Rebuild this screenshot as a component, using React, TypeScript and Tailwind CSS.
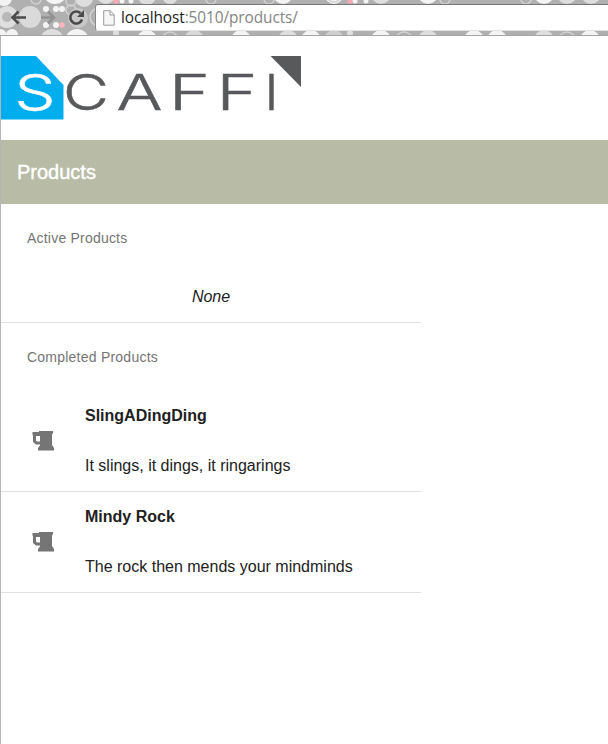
import React from "react";

type Dot = [number, number, number, string];

const dots: Dot[] = [
  [4, -2, 8, "#f2f2f2"], [7, 17, 11, "#dedede"], [7, 17, 5, "#b8b8b8"], [30, 17, 11, "#dadada"],
  [55, -8, 12, "#f4f4f4"], [78, 18, 10, "#c8c8c8"], [0, 36, 7, "#f4f4f4"], [12, 35, 6, "#f4f4f4"],
  [52, 41, 12, "#dedede"], [77, 41, 12, "#f4f4f4"], [46, 9, 3, "#f4f4f4"], [56, 9, 3, "#f4f4f4"],
  [62, 9, 3, "#f4f4f4"], [46, 25, 3, "#f4f4f4"], [56, 25, 3, "#f4f4f4"], [62, 25, 2.7, "#ffb3bd"],
  [84, -2, 9, "#dedede"], [106, -5, 9, "#e0e0e0"], [116, 1, 2.7, "#ffa8b4"], [122, 1, 2.5, "#f4f4f4"],
  [131, 1, 2.5, "#f4f4f4"], [147, -4, 9, "#dedede"], [170, -4, 8, "#dedede"],
  [283, -6, 10, "#f4f4f4"], [334, -5, 9, "#f4f4f4"], [350, 1, 2.7, "#ffa8b4"], [355, 1, 2.5, "#f4f4f4"],
  [366, 1, 2.5, "#f4f4f4"], [381, -6, 10, "#dedede"], [428, -6, 10, "#f4f4f4"],
  [544, -6, 10, "#f4f4f4"], [567, -6, 10, "#dedede"], [591, -6, 10, "#dedede"],
  [116, 33, 3, "#dedede"], [147, 40, 10, "#f4f4f4"], [194, 40, 10, "#d8d8d8"],
  [241, 40, 10, "#f4f4f4"], [288, 40, 10, "#dedede"],
  [311, 40, 10, "#f4f4f4"], [334, 40, 10, "#d0d0d0"], [350, 33, 3, "#dedede"],
  [381, 40, 10, "#f4f4f4"], [428, 40, 10, "#dedede"], [474, 40, 10, "#f4f4f4"],
  [497, 40, 10, "#f4f4f4"], [544, 40, 10, "#dedede"], [590, 40, 10, "#f4f4f4"],
];
const rings: [number, number, number][] = [
  [36, -1, 5], [71, 10, 5], [99, 17, 9], [71, 1, 5], [211, -1, 5], [269, -1, 5], [334, -5, 7],
  [445, -1, 5], [526, -1, 5], [170, 40, 8], [404, 40, 8], [567, 40, 8],
];

const letters = [
  { ch: "S", x: 14.5, w: 41, fill: "#fff" },
  { ch: "C", x: 63, w: 46, fill: "#58595b" },
  { ch: "A", x: 116.5, w: 46, fill: "#58595b" },
  { ch: "F", x: 169, w: 41, fill: "#58595b" },
  { ch: "F", x: 216.5, w: 41, fill: "#58595b" },
  { ch: "I", x: 264.5, w: 14, fill: "#58595b" },
];

function BrowserBar() {
  return (
    <header className="relative h-9 shrink-0 overflow-hidden bg-[#b0b0b0]">
      <svg className="absolute inset-0" width="608" height="36">
        {dots.map(([x, y, r, c], i) => <circle key={i} cx={x} cy={y} r={r} fill={c} />)}
        {rings.map(([x, y, r], i) => <circle key={i} cx={x} cy={y} r={r} fill="none" stroke="#d2d2d2" strokeWidth="1.5" />)}
        <path d="M26 17.5H13M18.5 11.5l-6 6 6 6" fill="none" stroke="#4b4b4b" strokeWidth="2.5" />
        <path d="M41 17.5H53M48 11.5l6 6-6 6" fill="none" stroke="#929292" strokeWidth="2.5" />
        <path d="M80.5 13.2A6 6 0 1 0 82 19.5" fill="none" stroke="#4b4b4b" strokeWidth="2.6" />
        <path d="M84 10v7h-7z" fill="#4b4b4b" />
        <path d="M0 35.5H608" stroke="#a5a5a5" />
      </svg>
      <div className="relative mt-1 ml-[95px] flex h-[27px] items-center rounded-l-[3px] border border-r-0 border-t-[#777] border-b-[#e3e3e3] border-l-[#888] bg-white pl-[7px]">
        <svg width="12" height="16" viewBox="0 0 12 16">
          <path d="M.7.7h6.5l4 4v10.5H.7zM7 .7V5h4.2" fill="#f7f7f7" stroke="#9a9a9a" />
        </svg>
        <span className="ml-[6px] text-[15.4px] leading-5 tracking-[-0.09px] whitespace-pre text-[#858585] font-['Open_Sans',sans-serif]">
          <span className="text-[#222]">localhost</span>:5010/products/
        </span>
      </div>
    </header>
  );
}

function Logo() {
  return (
    <svg className="block" width="304" height="104" viewBox="1 36 304 104">
      <path d="M1 56h35l27.5 29v34.6H1z" fill="#00aeef" />
      <path d="M270.5 56H301v31z" fill="#58595b" />
      {letters.map((l, i) => (
        <text key={i} x={l.x} y="110" textLength={l.w} lengthAdjust="spacingAndGlyphs" fill={l.fill} stroke={l.fill} strokeWidth="0.5" className="text-[49px] font-light font-['Inter',sans-serif]">{l.ch}</text>
      ))}
    </svg>
  );
}

function Mug() {
  return (
    <svg width="22" height="20" viewBox="0 0 22 20">
      <path d="M7 0H21V2L20 3.5V14L22 17V19.5H6V17L8 14.5V13.5H4L1 11V4.5L.5 3.5V1H7zM8 5H4V9.5L5 10.5H8z" fill="#757575" fillRule="evenodd" />
    </svg>
  );
}

function Item({ name, text }: { name: string; text: string }) {
  return (
    <li className="flex h-[101px] items-center border-b border-[#e0e0e0] pl-[31px]">
      <Mug />
      <div className="ml-[31px] text-base leading-[18px] text-[#212121]">
        <h3 className="font-bold">{name}</h3>
        <p className="mt-8">{text}</p>
      </div>
    </li>
  );
}

export default function App() {
  return (
    <div className="flex h-[744px] w-[608px] flex-col overflow-hidden bg-white font-['Liberation_Sans',Arial,sans-serif]">
      <BrowserBar />
      <main className="flex-1 border-l border-[#b5b5b5]">
        <Logo />
        <h1 className="flex h-16 items-center bg-[#b8bba6] pl-4 text-xl text-white [-webkit-text-stroke:0.4px_white]">Products</h1>
        <div className="w-[420px]">
          <section className="h-[119px] border-b border-[#e0e0e0]">
            <h2 className="pt-6 pl-[26px] text-sm leading-5 tracking-[0.21px] text-[#757575]">Active Products</h2>
            <p className="mt-10 text-center text-base leading-[18px] text-[#212121] italic">None</p>
          </section>
          <section>
            <h2 className="h-[68px] pt-6 pl-[26px] text-sm leading-5 tracking-[0.23px] text-[#757575]">Completed Products</h2>
            <ul>
              <Item name="SlingADingDing" text="It slings, it dings, it ringarings" />
              <Item name="Mindy Rock" text="The rock then mends your mindminds" />
            </ul>
          </section>
        </div>
      </main>
    </div>
  );
}
